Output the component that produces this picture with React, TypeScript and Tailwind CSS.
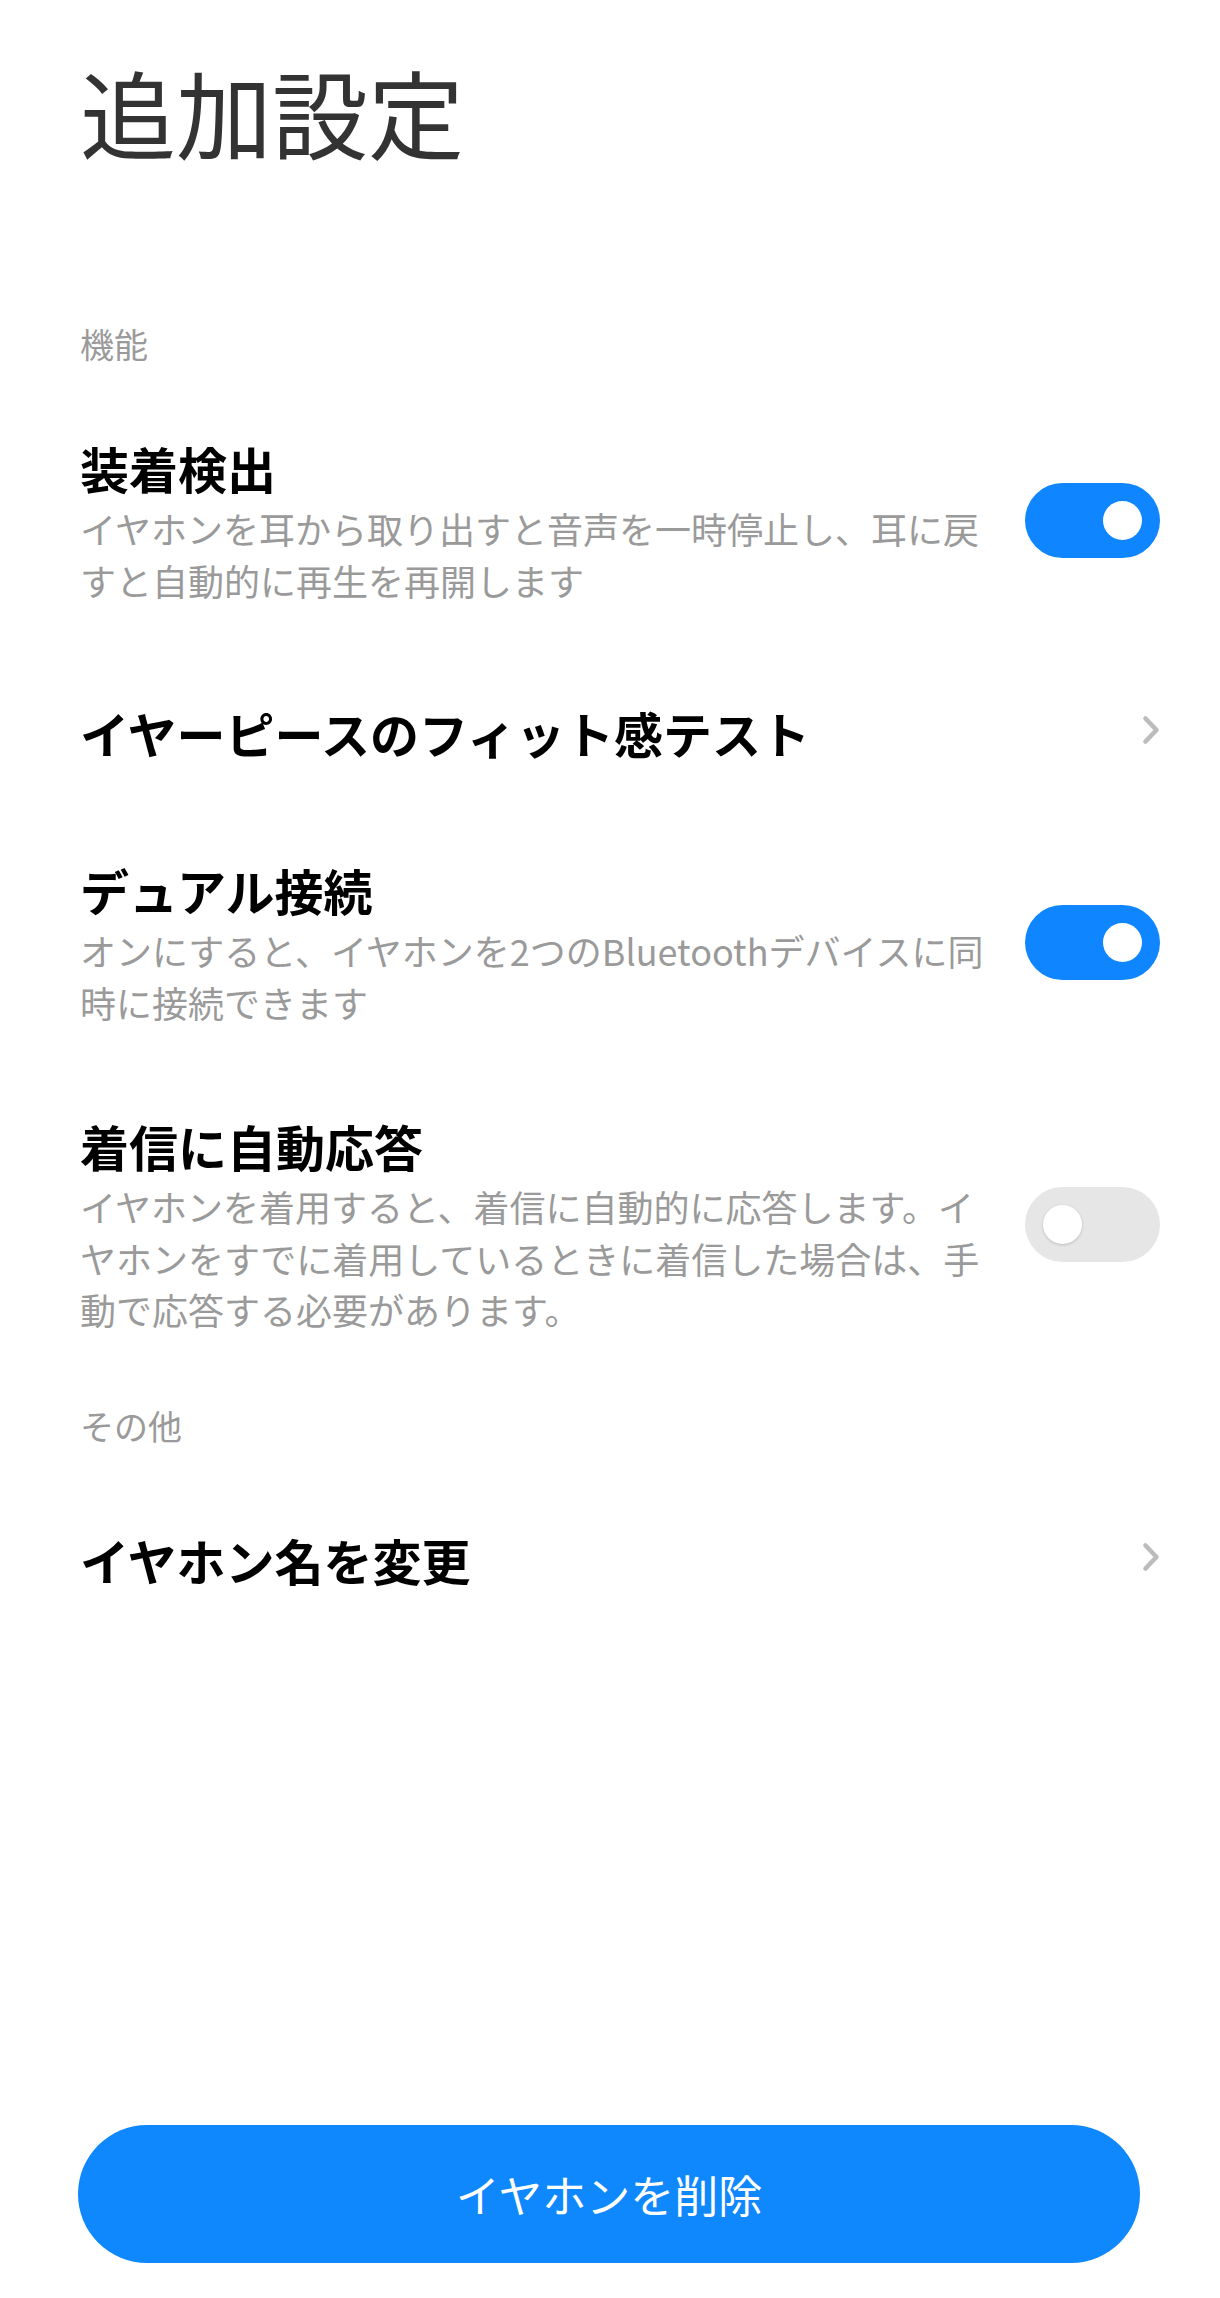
const sans = "font-[family-name:'Noto_Sans_CJK_JP','Noto_Sans',sans-serif]";

function Switch({ on }: { on: boolean }) {
  return (
    <div
      className={`-mt-[9px] flex h-[75px] w-[135px] shrink-0 items-center rounded-full px-[18px] ${
        on ? "justify-end bg-[#0f86ff]" : "justify-start bg-[#e6e6e6]"
      }`}
    >
      <div
        className={`h-[39px] w-[39px] rounded-full bg-white ${
          on ? "" : "shadow-[0_1px_3px_rgba(0,0,0,0.18)]"
        }`}
      />
    </div>
  );
}

function Chevron() {
  return (
    <svg width="18" height="30" viewBox="0 0 18 30" className="-mt-[6px] shrink-0">
      <path
        d="M3.5 3.5 L14.5 15 L3.5 26.5"
        fill="none"
        stroke="#bcbcbc"
        strokeWidth="4.6"
        strokeLinecap="round"
        strokeLinejoin="round"
      />
    </svg>
  );
}

function ToggleRow({
  title,
  desc,
  on,
  className,
}: {
  title: string;
  desc: string;
  on: boolean;
  className: string;
}) {
  return (
    <div className={`flex items-center justify-between ${className}`}>
      <div className="w-[912px]">
        <div className="text-[49px] leading-[48px] font-bold text-black">{title}</div>
        <p className="mt-[11px] text-[36px] leading-[51.5px] text-[#9a9a9a]">{desc}</p>
      </div>
      <Switch on={on} />
    </div>
  );
}

function LinkRow({ title, className }: { title: string; className: string }) {
  return (
    <div className={`flex items-center justify-between ${className}`}>
      <div className="text-[49px] leading-[48px] font-bold text-black">{title}</div>
      <Chevron />
    </div>
  );
}

function SectionLabel({ label, className }: { label: string; className: string }) {
  return <div className={`text-[34px] leading-[34px] text-[#9a9a9a] ${className}`}>{label}</div>;
}

export default function App() {
  return (
    <div className={`flex min-h-screen flex-col bg-white pl-[80px] pr-[60px] ${sans}`}>
      <h1 className="pt-[63px] text-[96px] leading-[96px] font-normal text-[#333333]">追加設定</h1>

      <SectionLabel label="機能" className="mt-[168px]" />

      <ToggleRow
        className="mt-[83px]"
        title="装着検出"
        desc="イヤホンを耳から取り出すと音声を一時停止し、耳に戻すと自動的に再生を再開します"
        on
      />
      <LinkRow className="mt-[103px]" title="イヤーピースのフィット感テスト" />
      <ToggleRow
        className="mt-[109px]"
        title="デュアル接続"
        desc="オンにすると、イヤホンを2つのBluetoothデバイスに同時に接続できます"
        on
      />
      <ToggleRow
        className="mt-[94px]"
        title="着信に自動応答"
        desc="イヤホンを着用すると、着信に自動的に応答します。イヤホンをすでに着用しているときに着信した場合は、手動で応答する必要があります。"
        on={false}
      />

      <SectionLabel label="その他" className="mt-[73px]" />
      <LinkRow className="mt-[93px]" title="イヤホン名を変更" />

      <div className="mt-auto pb-[35px] pr-[18px]">
        <button className="h-[138px] w-full -ml-[2px] rounded-full bg-[#0f88fe] text-[44px] font-normal text-white">
          イヤホンを削除
        </button>
      </div>
    </div>
  );
}
